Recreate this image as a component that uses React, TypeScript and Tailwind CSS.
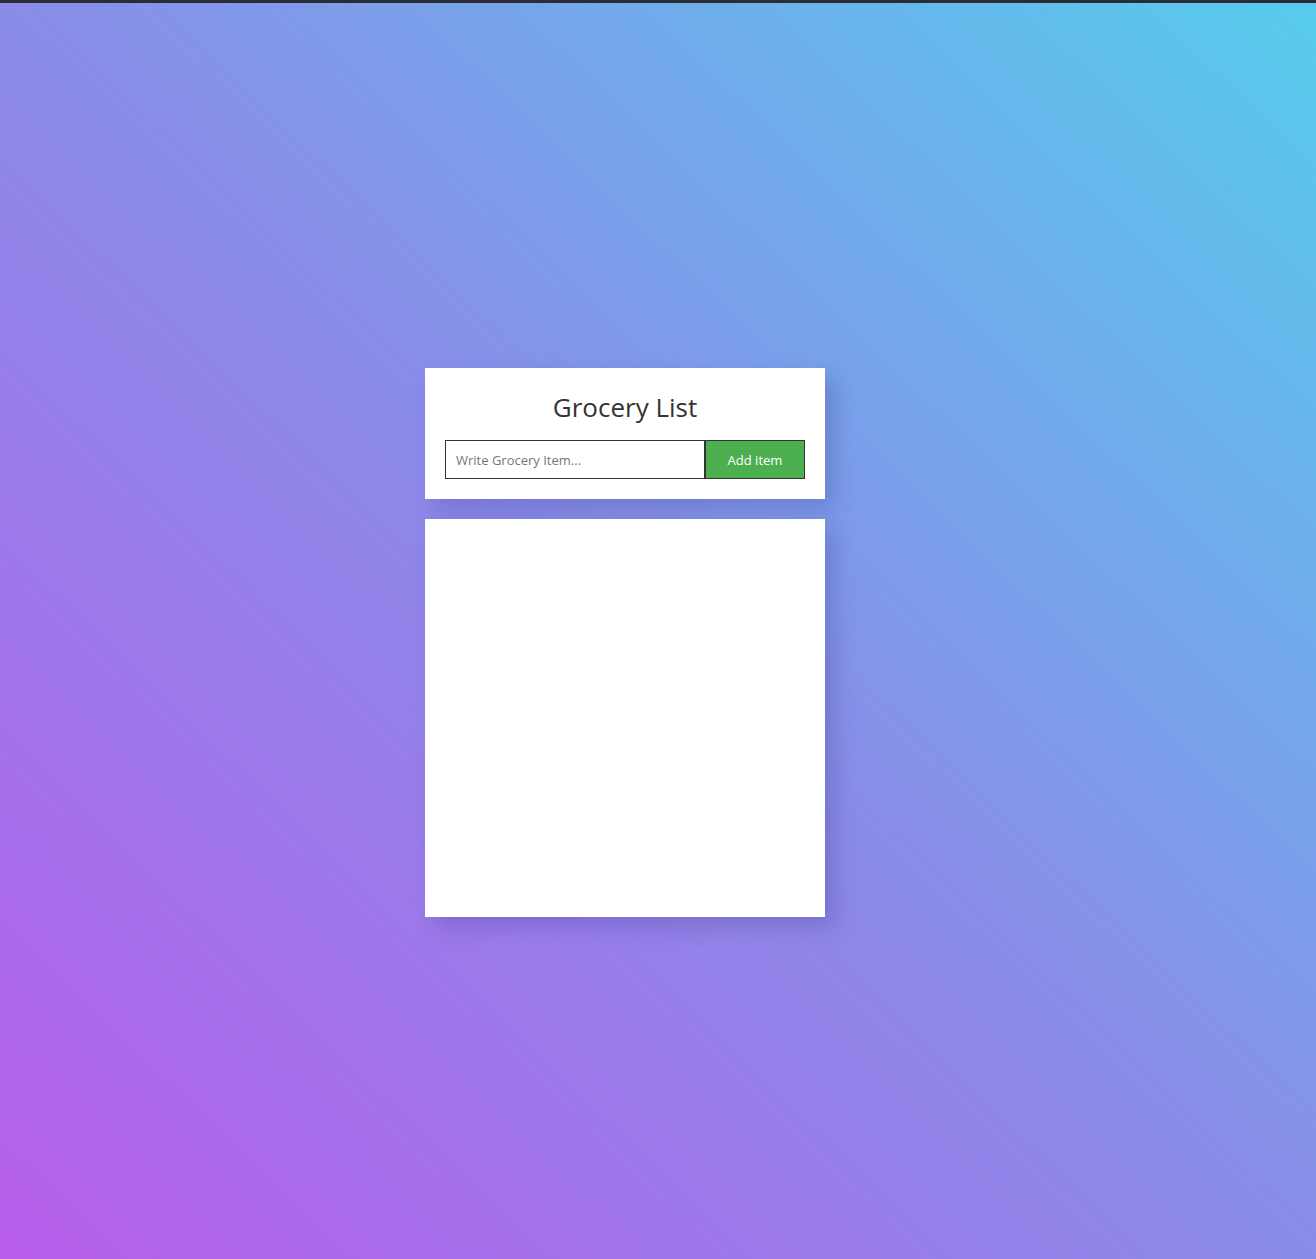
import React from "react";

export default function App() {
  return (
    <div
      className="min-h-[1259px] w-full flex flex-col bg-[linear-gradient(to_top_right,#b75deb,#8a8ce9_50%,#56cced)]"
      style={{ fontFamily: '"Open Sans", "Noto Sans", sans-serif' }}
    >
      <div className="h-[3px] w-full bg-[#2a2d35]" />
      <div className="flex flex-col items-center pt-[365px] pr-[66px]">
        <div className="w-[400px] bg-white px-5 pt-[21px] pb-5 shadow-[10px_10px_20px_rgba(40,40,120,0.22)]">
          <h1 className="text-center text-[26px] leading-[36px] text-[#333] font-normal">Grocery List</h1>
          <div className="mt-[15px] flex h-[39px]">
            <input
              className="w-[260px] h-full border border-[#333] px-[10px] text-[13px] text-[#333] placeholder:text-[#777] outline-none"
              placeholder="Write Grocery Item..."
            />
            <button className="w-[100px] h-full border border-[#333] bg-[#4caf50] text-white text-[13px] pt-[2px]">
              Add item
            </button>
          </div>
        </div>
        <div className="mt-[20px] w-[400px] h-[398px] bg-white shadow-[10px_10px_20px_rgba(40,40,120,0.22)]" />
      </div>
    </div>
  );
}
